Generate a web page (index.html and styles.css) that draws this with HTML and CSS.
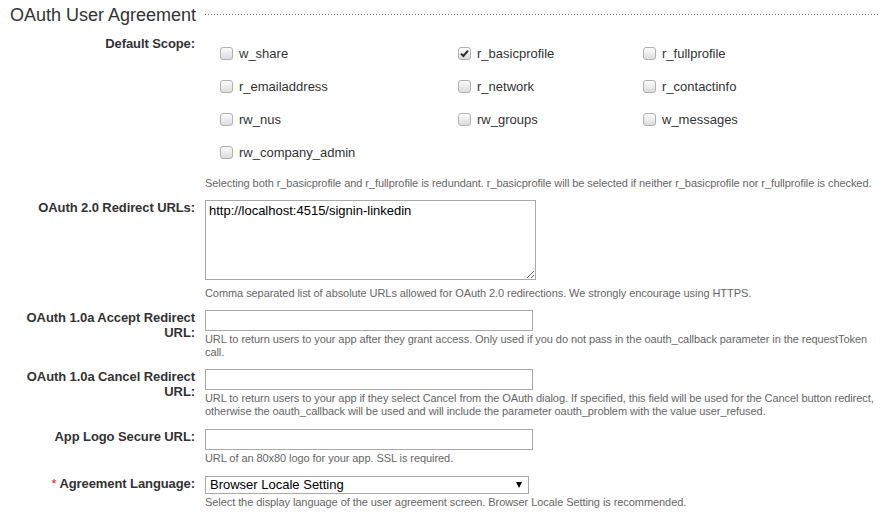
FILE: index.html
```html
<!DOCTYPE html>
<html lang="en">
<head>
<meta charset="utf-8">
<title>OAuth User Agreement</title>
<link rel="stylesheet" href="styles.css">
</head>
<body>
<div class="page">
  <div class="section-head">
    <h2 class="section-title">OAuth User Agreement</h2>
    <div class="section-rule"></div>
  </div>

  <div class="form-row">
    <div class="label">Default Scope:</div>
    <div class="field">
      <div class="scope-grid">
        <label class="scope"><span class="cb"></span>w_share</label>
        <label class="scope"><span class="cb cb-checked"><svg viewBox="0 0 13 13" width="13" height="13"><path d="M3 6.6 L5.4 9 L10 3.6" fill="none" stroke="#2b2b2b" stroke-width="2"/></svg></span>r_basicprofile</label>
        <label class="scope"><span class="cb"></span>r_fullprofile</label>
        <label class="scope"><span class="cb"></span>r_emailaddress</label>
        <label class="scope"><span class="cb"></span>r_network</label>
        <label class="scope"><span class="cb"></span>r_contactinfo</label>
        <label class="scope"><span class="cb"></span>rw_nus</label>
        <label class="scope"><span class="cb"></span>rw_groups</label>
        <label class="scope"><span class="cb"></span>w_messages</label>
        <label class="scope"><span class="cb"></span>rw_company_admin</label>
      </div>
      <div class="help help-scope">Selecting both r_basicprofile and r_fullprofile is redundant. r_basicprofile will be selected if neither r_basicprofile nor r_fullprofile is checked.</div>
    </div>
  </div>

  <div class="form-row">
    <div class="label">OAuth 2.0 Redirect URLs:</div>
    <div class="field">
      <textarea class="textarea" spellcheck="false">http://localhost:4515/signin-linkedin</textarea>
      <div class="help help-after-area">Comma separated list of absolute URLs allowed for OAuth 2.0 redirections. We strongly encourage using HTTPS.</div>
    </div>
  </div>

  <div class="form-row">
    <div class="label">OAuth 1.0a Accept Redirect URL:</div>
    <div class="field">
      <input class="input" type="text">
      <div class="help">URL to return users to your app after they grant access. Only used if you do not pass in the oauth_callback parameter in the requestToken call.</div>
    </div>
  </div>

  <div class="form-row">
    <div class="label">OAuth 1.0a Cancel Redirect URL:</div>
    <div class="field">
      <input class="input" type="text">
      <div class="help">URL to return users to your app if they select Cancel from the OAuth dialog. If specified, this field will be used for the Cancel button redirect, otherwise the oauth_callback will be used and will include the parameter oauth_problem with the value user_refused.</div>
    </div>
  </div>

  <div class="form-row form-row-loose">
    <div class="label">App Logo Secure URL:</div>
    <div class="field">
      <input class="input" type="text">
      <div class="help">URL of an 80x80 logo for your app. SSL is required.</div>
    </div>
  </div>

  <div class="form-row form-row-loose">
    <div class="label"><span class="req">*</span> Agreement Language:</div>
    <div class="field">
      <div class="select-wrap">
        <select class="select"><option>Browser Locale Setting</option></select>
        <span class="select-arrow"></span>
      </div>
      <div class="help">Select the display language of the user agreement screen. Browser Locale Setting is recommended.</div>
    </div>
  </div>
</div>
</body>
</html>
```

FILE: styles.css
```css
* { box-sizing: border-box; }

html, body {
  margin: 0;
  padding: 0;
  background: #fff;
}

body {
  font-family: "Liberation Sans", Arial, sans-serif;
  font-size: 13px;
  color: #333;
}

.page {
  width: 887px;
}

.section-head {
  display: flex;
  padding: 5px 9px 0 10px;
}

.section-title {
  margin: 0;
  font-size: 18px;
  font-weight: normal;
  line-height: 21px;
  color: #333;
}

.section-rule {
  flex: 1;
  height: 1px;
  margin: 9px 0 0 9px;
  background: repeating-linear-gradient(to right, #777 0 1px, transparent 1px 3px);
}

.form-row {
  display: grid;
  grid-template-columns: 195px 680px;
  column-gap: 10px;
  margin-top: 10px;
}

.form-row-loose {
  margin-top: 11px;
}

.label {
  text-align: right;
  font-weight: bold;
  font-size: 13px;
  line-height: 15px;
  letter-spacing: -0.09px;
  color: #333;
}

.req {
  color: #cc1f1f;
  font-weight: normal;
}

.scope-grid {
  display: grid;
  grid-template-columns: 238px 185px 1fr;
  padding-left: 15px;
  margin-top: 1px;
}

.scope {
  display: block;
  height: 33px;
  line-height: 33px;
  color: #333;
  white-space: nowrap;
}

.cb {
  display: inline-block;
  width: 13px;
  height: 13px;
  margin-right: 6px;
  vertical-align: -2px;
  border: 1px solid #b0b0b0;
  border-radius: 3px;
  background: linear-gradient(#fbfbfb, #dcdcdc);
  position: relative;
}

.cb svg {
  position: absolute;
  left: -1px;
  top: -1px;
}

.help {
  font-size: 11px;
  line-height: 13px;
  letter-spacing: -0.07px;
  color: #666;
  margin-top: 2px;
}

.help-scope {
  margin-top: 8px;
}

.help-after-area {
  margin-top: 7px;
}

.textarea {
  display: block;
  width: 331px;
  height: 80px;
  margin: 0;
  padding: 2px 3px;
  border: 1px solid #a9a9a9;
  font-family: "Liberation Sans", Arial, sans-serif;
  font-size: 13px;
  line-height: 15px;
  color: #000;
  background: #fff;
}

.input {
  display: block;
  width: 328px;
  height: 21px;
  margin: 0;
  padding: 1px 3px;
  border: 1px solid #a9a9a9;
  font-family: "Liberation Sans", Arial, sans-serif;
  font-size: 13px;
  background: #fff;
}

.select-wrap {
  position: relative;
  width: 324px;
  height: 18px;
}

.select {
  display: block;
  width: 324px;
  height: 18px;
  margin: 0;
  padding: 0 4px;
  border: 1px solid #a9a9a9;
  border-radius: 0;
  -webkit-appearance: none;
  appearance: none;
  background: #fff;
  font-family: "Liberation Sans", Arial, sans-serif;
  font-size: 13px;
  line-height: 16px;
  color: #000;
}

.select-arrow {
  position: absolute;
  right: 7px;
  top: 6px;
  width: 0;
  height: 0;
  border-left: 3px solid transparent;
  border-right: 3px solid transparent;
  border-top: 6px solid #000;
}
```
